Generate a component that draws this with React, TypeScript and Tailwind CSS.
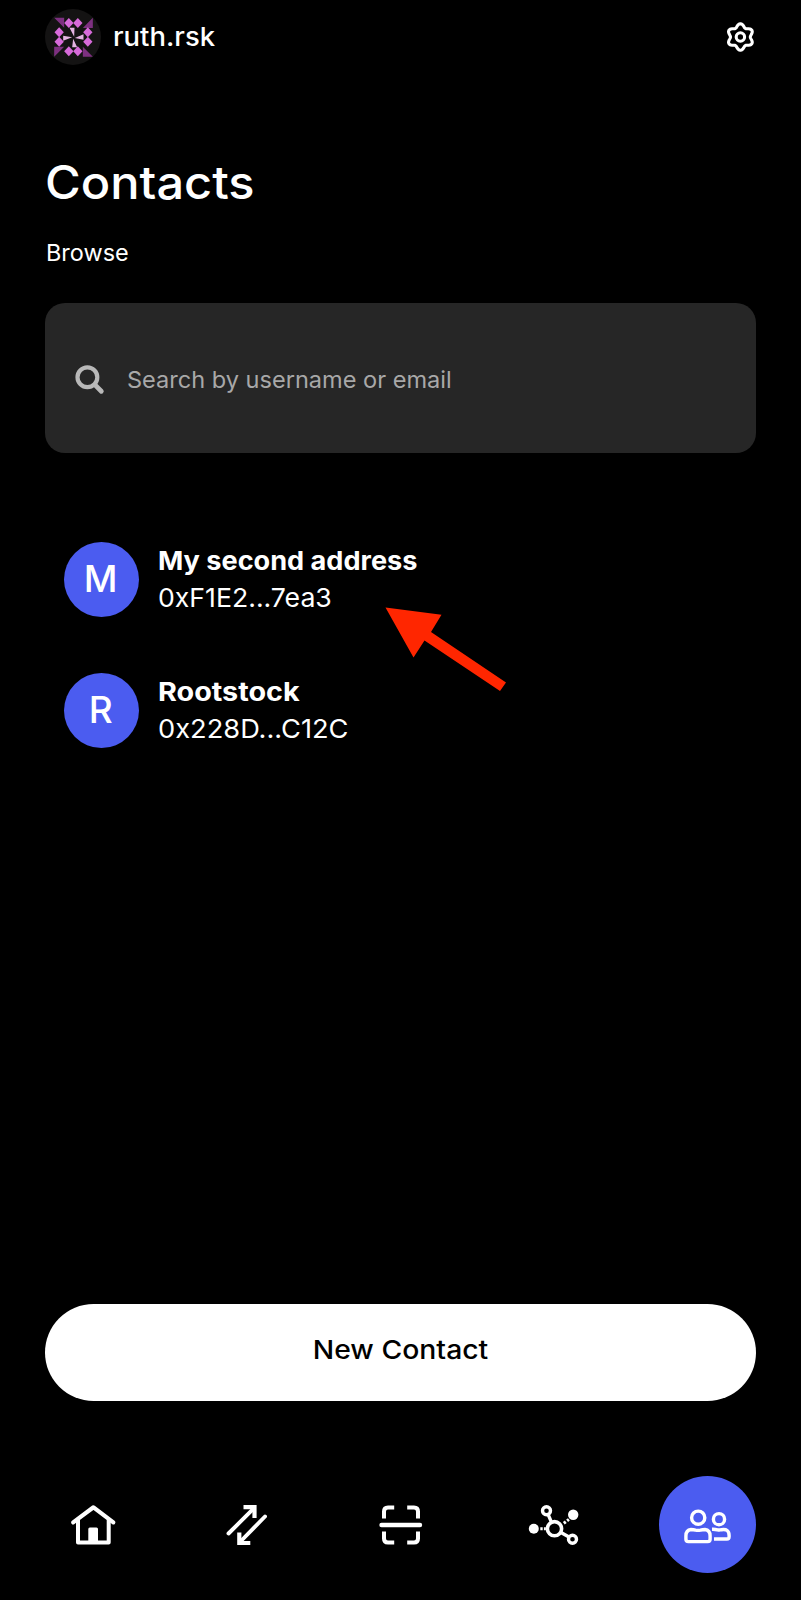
import React from 'react';

const AVATAR_DIAMONDS: [number, number][] = [
  [85, 54], [112, 54], [56, 82], [56, 110], [142, 82], [142, 110], [85, 139], [112, 139],
];

function Avatar() {
  return (
    <svg className="size-14 shrink-0" viewBox="13.5 12 168 168">
      <circle cx="97.5" cy="96" r="84" fill="#141313" />
      <path d="M41 38H71V68ZM157 38V69H127ZM157 155H127V125ZM41 155V125H71Z" fill="#7d3080" />
      {AVATAR_DIAMONDS.map(([x, y]) => (
        <path key={`${x}-${y}`} d={`M${x} ${y - 15}l14 15l-14 15l-14 -15z`} fill="#d76ada" />
      ))}
      <path d="M87 68H102L101 95ZM129 88V104L103 99ZM110 127H95L98 101ZM68 107V92L95 97Z" fill="#e3b4e2" />
    </svg>
  );
}

const gearPath =
  Array.from({ length: 72 }, (_, i) => {
    const a = (i * Math.PI) / 36;
    const r = 11.6 + 1.7 * Math.cos(6 * a);
    return `${i ? 'L' : 'M'}${(16.4 + r * Math.sin(a)).toFixed(2)} ${(16 - r * Math.cos(a)).toFixed(2)}`;
  }).join('') + 'Z';

function GearIcon() {
  return (
    <svg className="size-8" viewBox="0 0 32 32" fill="none" stroke="white" strokeWidth="3.1" strokeLinejoin="round">
      <path d={gearPath} />
      <circle cx="16.4" cy="16" r="4.2" />
    </svg>
  );
}

function SearchIcon() {
  return (
    <svg className="mb-px size-8" viewBox="0 0 32 32" fill="none" stroke="#b8b8b8" strokeLinecap="round">
      <circle cx="13.4" cy="13.3" r="9.9" strokeWidth="4.2" />
      <path d="M21 20.9L27.3 27.2" strokeWidth="4.8" />
    </svg>
  );
}

function NavIcon({ children }: { children: React.ReactNode }) {
  return (
    <svg className="size-[52px]" viewBox="0 0 52 52" fill="none" stroke="white" strokeWidth="4">
      {children}
    </svg>
  );
}

function Contact({ initial, children }: { initial: string; children: React.ReactNode }) {
  return (
    <li className="flex h-[75px] items-center gap-[19px]">
      <span className="flex size-[75px] items-center justify-center rounded-full bg-[#4b5cf0] pr-px pb-0.5 text-[37px] leading-none font-medium">
        {initial}
      </span>
      <span className="flex flex-col items-start pb-0.5">{children}</span>
    </li>
  );
}

export default function App() {
  return (
    <main className="relative flex h-[1600px] w-[801px] flex-col bg-black px-[45px] font-['Inter',sans-serif] text-white">
      <header className="flex h-[74px] items-center justify-between">
        <div className="flex items-center gap-3">
          <Avatar />
          <span className="origin-left scale-x-[1.055] text-[26px] leading-8 font-medium">ruth.rsk</span>
        </div>
        <button aria-label="Settings"><GearIcon /></button>
      </header>

      <h1 className="mt-[80px] origin-left scale-x-[1.06] text-[46px] leading-[56px] font-medium">Contacts</h1>
      <p className="mt-[29px] origin-left scale-x-[1.02] pl-px text-[23px] leading-7">Browse</p>

      <label className="mt-[36px] flex h-[150px] items-center gap-[21px] rounded-[20px] bg-[#262626] pt-[5px] pl-[29px] text-[23px]">
        <SearchIcon />
        <span className="origin-left scale-x-[1.024] text-[#a8a8a8]">Search by username or email</span>
      </label>

      <ul className="mt-[89.3px] flex flex-col gap-14 pl-[18.7px] text-[26px] leading-[37px]">
        <Contact initial="M">
          <b className="origin-left scale-x-[1.043]">My second address</b>
          <span className="origin-left scale-x-[1.025]">0xF1E2...7ea3</span>
        </Contact>
        <Contact initial="R">
          <b className="origin-left scale-x-[1.105]">Rootstock</b>
          <span className="origin-left scale-x-[1.048]">0x228D...C12C</span>
        </Contact>
      </ul>

      <svg className="absolute top-[600px] left-[380px] h-[100px] w-[135px]" viewBox="380 600 135 100">
        <path d="M385.5 607.5L441.5 614.7L431 632L506 682.5L500 691L424.5 640.5L413.5 657.5Z" fill="#ff2600" />
      </svg>

      <button className="mt-auto flex h-[97px] shrink-0 items-center justify-center rounded-full bg-white pb-1.5 text-[26px] font-medium text-black">
        <span className="scale-x-[1.09]">New Contact</span>
      </button>

      <nav className="mt-[75px] mb-[27px] flex h-[97px] shrink-0 justify-between">
        <a className="flex w-[97px] items-center justify-center pt-px">
          <NavIcon>
            <path d="M5.2 23.4L25.5 8.3L45.3 23.4" strokeLinecap="round" strokeLinejoin="round" strokeWidth="4.2" />
            <path d="M10 21V43.5H40.7V21" strokeLinejoin="round" />
            <rect x="20.3" y="28.5" width="9.7" height="15" rx="1.5" fill="white" stroke="none" />
          </NavIcon>
        </a>
        <a className="flex w-[97px] items-center justify-center pt-px">
          <NavIcon>
            <path d="M7.5 34.5L33 9.2M44 17.5L19 43" strokeLinecap="round" strokeWidth="3.9" />
            <path d="M22.5 8.2H33.5V19M18.3 33.5V44H29.3" strokeWidth="4.2" />
          </NavIcon>
        </a>
        <a className="flex w-[97px] items-center justify-center pt-px">
          <NavIcon>
            <path d="M9 19.5V12.5Q9 8.5 13 8.5H19.2M32.2 8.5H39Q43 8.5 43 12.5V19.5M43 32.5V39.5Q43 43.5 39 43.5H32.2M19.2 43.5H13Q9 43.5 9 39.5V32.5" />
            <path d="M6.5 26H45" strokeWidth="4.4" strokeLinecap="round" />
          </NavIcon>
        </a>
        <a className="flex w-[97px] items-center justify-center pt-px">
          <NavIcon>
            <g transform="translate(0.500 0)">
              <circle cx="26" cy="29.7" r="7.1" strokeWidth="3.6" />
              <circle cx="18" cy="11.8" r="4" strokeWidth="3.4" />
              <circle cx="44" cy="40.2" r="4" strokeWidth="3.4" />
              <path d="M19.8 15.8L22.8 22.8M32.5 33.5L40.5 38" strokeWidth="3.4" />
              <path d="M11.8 29.8H14.2M15.4 29.8H17.4M35.3 24.3L37.3 22.8M38.6 21.8L40.4 20.4" strokeWidth="3" />
              <circle cx="5.3" cy="29.7" r="5" fill="white" stroke="none" />
              <circle cx="44.7" cy="15.8" r="5.2" fill="white" stroke="none" />
            </g>
          </NavIcon>
        </a>
        <a className="flex size-[97px] items-center justify-center rounded-full bg-[#4b5cf0] pt-px">
          <NavIcon>
            <g transform="translate(-0.500 0)" strokeWidth="3.4" strokeLinejoin="round">
              <circle cx="16.7" cy="18.7" r="6.6" />
              <circle cx="37.5" cy="20.2" r="5.6" />
              <path d="M9.5 30.5Q12 30.5 14 31.1Q16.5 31.7 19 31.1Q21 30.5 23.5 30.5Q28.6 31 28.6 37V40.2Q28.6 42.6 26.2 42.6H6.8Q4.4 42.6 4.4 40.2V37Q4.4 31 9.5 30.5Z" />
              <path d="M30.5 30.3Q34 30.2 36 30.8Q38 31.3 40 30.7Q47.6 29.4 47.6 36.5V37.8Q47.6 40 45.4 40H32.5" />
            </g>
          </NavIcon>
        </a>
      </nav>
    </main>
  );
}
